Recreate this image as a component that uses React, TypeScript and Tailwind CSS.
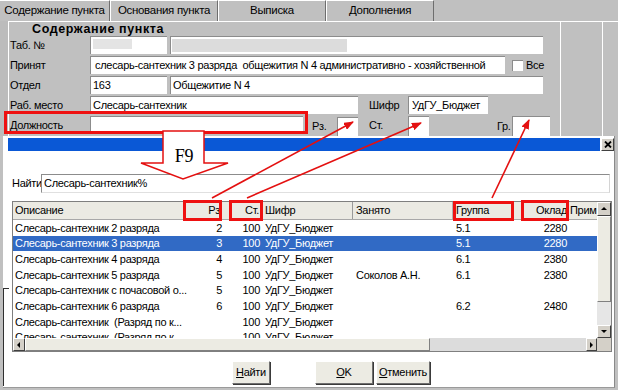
import React from "react";

type Row = { d: string; rz: string; st: string; sh: string; z: string; g: string; o: string; sel?: boolean };

const rows: Row[] = [
  { d: "Слесарь-сантехник 2 разряда", rz: "2", st: "100", sh: "УдГУ_Бюджет", z: "", g: "5.1", o: "2280" },
  { d: "Слесарь-сантехник 3 разряда", rz: "3", st: "100", sh: "УдГУ_Бюджет", z: "", g: "5.1", o: "2280", sel: true },
  { d: "Слесарь-сантехник 4 разряда", rz: "4", st: "100", sh: "УдГУ_Бюджет", z: "", g: "6.1", o: "2380" },
  { d: "Слесарь-сантехник 5 разряда", rz: "5", st: "100", sh: "УдГУ_Бюджет", z: "Соколов А.Н.", g: "6.1", o: "2380" },
  { d: "Слесарь-сантехник с почасовой о...", rz: "5", st: "100", sh: "УдГУ_Бюджет", z: "", g: "", o: "" },
  { d: "Слесарь-сантехник 6 разряда", rz: "6", st: "100", sh: "УдГУ_Бюджет", z: "", g: "6.2", o: "2480" },
  { d: "Слесарь-сантехник  (Разряд по к...", rz: "", st: "100", sh: "УдГУ_Бюджет", z: "", g: "", o: "" },
  { d: "Слесарь-сантехник  (Разряд по к...", rz: "", st: "100", sh: "УдГУ_Бюджет", z: "", g: "", o: "" },
];

function Input({ className = "", children }: { className?: string; children?: React.ReactNode }) {
  return (
    <div
      className={
        "bg-white border-t border-l border-[#8c8c8c] flex items-center whitespace-pre overflow-hidden leading-none " +
        className
      }
    >
      {children}
    </div>
  );
}

function Tab({ label, w, first }: { label: string; w: string; first?: boolean }) {
  return (
    <div
      className={
        "h-full flex items-center justify-center border-r border-r-[#6e6e6e] border-t border-t-white " +
        (first ? "" : "border-l border-l-white ") +
        w
      }
    >
      {label}
    </div>
  );
}

function Btn({ children, className = "" }: { children: React.ReactNode; className?: string }) {
  return (
    <div
      className={
        "h-[23px] flex items-center justify-center bg-[#ecebe3] border border-t-white border-l-white border-r-[#6f6f6f] border-b-[#6f6f6f] shadow-[1px_1px_0_#3a3a3a] " +
        className
      }
    >
      {children}
    </div>
  );
}

function Tri({ dir }: { dir: "up" | "down" | "left" | "right" }) {
  const pts: Record<string, string> = {
    up: "1,5 4,2 7,5",
    down: "1,2 4,5 7,2",
    left: "5,1 2,4 5,7",
    right: "2,1 5,4 2,7",
  };
  return (
    <svg width="8" height="8" viewBox="0 0 8 8">
      <polygon points={pts[dir]} fill="#000" />
    </svg>
  );
}

function ScrollBtn({ dir, className = "" }: { dir: "up" | "down" | "left" | "right"; className?: string }) {
  return (
    <div
      className={
        "flex items-center justify-center bg-[#d4d0c8] border border-t-white border-l-white border-r-[#404040] border-b-[#404040] " +
        className
      }
    >
      <Tri dir={dir} />
    </div>
  );
}

const cols = {
  d: "w-[171px] pl-[2px]",
  rz: "w-[41px] pr-[3px] text-right",
  st: "w-[37px] pr-[2px] text-right",
  sh: "w-[91px] pl-[3px]",
  z: "w-[100px] pl-[3px]",
  g: "w-[66px] pl-[3px]",
  o: "w-[50px] pr-[2px] text-right",
  p: "w-[28px] pl-[1px]",
};

export default function App() {
  return (
    <div className="relative w-[618px] h-[390px] overflow-hidden bg-[#c0c0c0] text-[11px] tracking-[-0.3px] text-black font-['Liberation_Sans',Arial,sans-serif]">
      {/* Tabs */}
      <div className="flex h-[21px] text-[11.5px]">
        <Tab label="Содержание пункта" w="w-[110px]" first />
        <Tab label="Основания пункта" w="w-[108px]" />
        <Tab label="Выписка" w="w-[108px]" />
        <Tab label="Дополнения" w="w-[108px]" />
      </div>

      {/* Form panel */}
      <div className="flex h-[115px]">
        <div className="w-[8px] bg-[#bcbcbc]" />
        <div className="flex-1 flex border-t border-l border-white">
          <div className="w-[551px] flex flex-col">
            <div className="h-[14px] pl-[23px] font-bold text-[12.5px] tracking-[0.6px] leading-[14px]">Содержание пункта</div>
            <div className="flex flex-col gap-[2px]">
              {/* Таб. № */}
              <div className="flex h-[18px] items-center">
                <div className="w-[81px] pl-[1px]">Таб. №</div>
                <Input className="w-[77px] h-full items-start">
                  <div className="mt-[2px] ml-[2px] w-[39px] h-[10px] bg-[#e4e4e4]" />
                </Input>
                <Input className="w-[373px] h-full ml-[3px]">
                  <div className="ml-[1px] w-[175px] h-[13px] bg-[#dcdcdc]" />
                </Input>
              </div>
              {/* Принят */}
              <div className="flex h-[18px] items-center">
                <div className="w-[81px] pl-[1px]">Принят</div>
                <Input className="w-[415px] h-full pl-[4px]">
                  слесарь-сантехник 3 разряда  общежития N 4 административно - хозяйственной
                </Input>
                <div className="ml-[7px] w-[11px] h-[11px] bg-white border-t border-l border-[#8c8c8c]" />
                <div className="ml-[3px]">Все</div>
              </div>
              {/* Отдел */}
              <div className="flex h-[18px] items-center">
                <div className="w-[81px] pl-[1px]">Отдел</div>
                <Input className="w-[77px] h-full pl-[2px]">163</Input>
                <Input className="w-[373px] h-full ml-[3px] pl-[2px]">Общежитие N 4</Input>
              </div>
              {/* Раб. место */}
              <div className="flex h-[18px] items-center">
                <div className="w-[81px] pl-[1px]">Раб. место</div>
                <Input className="w-[268px] h-full pl-[2px]">Слесарь-сантехник</Input>
                <div className="w-[50px] pl-[11px]">Шифр</div>
                <Input className="w-[80px] h-full pl-[3px]">УдГУ_Бюджет</Input>
              </div>
              {/* Должность */}
              <div className="flex h-[18px] items-start">
                <div className="w-[81px] pl-[1px] h-[18px] flex items-center">Должность</div>
                <Input className="w-[213px] h-[18px]" />
                <div className="w-[34px] pl-[9px] h-[18px] flex items-center mt-[1px]">Рз.</div>
                <Input className="w-[21px] h-[21px] mt-[1px]" />
                <div className="w-[50px] pl-[11px] h-[18px] flex items-center">Ст.</div>
                <Input className="w-[21px] h-[21px]" />
                <div className="w-[68px]" />
                <div className="w-[15px] h-[18px] flex items-center mt-[1px]">Гр.</div>
                <Input className="w-[38px] h-[21px]" />
              </div>
            </div>
          </div>
          <div className="w-[1px] bg-white" />
          <div className="w-[41px]" />
          <div className="w-[1px] bg-white" />
        </div>
      </div>

      {/* Dialog */}
      <div className="flex h-[254px]">
        <div className="w-[3px]" />
        <div className="w-[612px] h-[252px] bg-white border-r border-b border-r-[#8a8a8a] border-b-[#9a9a9a] flex flex-col">
          <div className="h-[2px]" />
          <div className="flex h-[13px] pl-[5px]">
            <div className="w-[592px] bg-[#0a58d6]" />
            <div className="ml-[1px] w-[13px] h-[13px] bg-[#d4d0c8] border border-t-white border-l-white border-r-[#404040] border-b-[#404040] flex items-center justify-center">
              <svg width="8" height="7" viewBox="0 0 8 7">
                <path d="M1 0.5 L7 6.5 M7 0.5 L1 6.5" stroke="#000" strokeWidth="1.8" />
              </svg>
            </div>
          </div>

          {/* Search */}
          <div className="flex items-center h-[19px] mt-[23px] pl-[9px]">
            <div className="w-[29px]">Найти</div>
            <div className="w-[569px] h-full bg-white border-t border-l border-t-[#8c8c8c] border-l-[#8c8c8c] border-r border-b border-r-[#d4d4d4] border-b-[#e0e0e0] flex items-center pl-[2px]">
              Слесарь-сантехник%
            </div>
          </div>

          {/* List */}
          <div className="ml-[9px] mt-[8px] w-[600px] h-[151px] border border-[#7f7f7f] flex flex-col">
            <div className="flex h-[136px]">
              <div className="w-[584px] flex flex-col overflow-hidden">
                <div className="flex h-[18px] shrink-0 items-center bg-[#ebeae3] border-b border-b-[#a8a8a8] whitespace-nowrap">
                  <div className={cols.d + " border-r border-r-[#b0b0b0] h-full flex items-center"}>Описание</div>
                  <div className="w-[41px] pr-[5px] h-full flex items-center justify-end">Рз</div>
                  <div className={cols.st + " h-full flex items-center justify-end border-r border-r-[#b0b0b0]"}>Ст.</div>
                  <div className={cols.sh + " h-full flex items-center border-r border-r-[#9a9a9a]"}>Шифр</div>
                  <div className={cols.z + " h-full flex items-center border-r border-r-[#b0b0b0]"}>Занято</div>
                  <div className={cols.g + " h-full flex items-center"}>Группа</div>
                  <div className={cols.o + " h-full flex items-center justify-end"}>Оклад</div>
                  <div className={cols.p + " h-full flex items-center overflow-hidden"}>Прим</div>
                </div>
                {rows.map((r, i) => (
                  <div
                    key={i}
                    className={
                      "flex h-[15.7px] shrink-0 items-center whitespace-pre " +
                      (r.sel ? "bg-[#316ac5] text-white" : "")
                    }
                  >
                    <div className={cols.d}>{r.d}</div>
                    <div className={cols.rz}>{r.rz}</div>
                    <div className={cols.st}>{r.st}</div>
                    <div className={cols.sh}>{r.sh}</div>
                    <div className={cols.z}>{r.z}</div>
                    <div className={cols.g}>{r.g}</div>
                    <div className={cols.o}>{r.o}</div>
                    <div className={cols.p}></div>
                  </div>
                ))}
              </div>
              {/* vertical scrollbar */}
              <div className="w-[14px] flex flex-col">
                <ScrollBtn dir="up" className="h-[14px]" />
                <div className="h-[86px] bg-[#ecebe3] border border-t-white border-l-white border-r-[#808080] border-b-[#808080]" />
                <div className="h-[23px] bg-[#e6e6e6]" />
                <ScrollBtn dir="down" className="h-[13px]" />
              </div>
            </div>
            {/* horizontal scrollbar */}
            <div className="flex h-[13px]">
              <ScrollBtn dir="left" className="w-[12px]" />
              <div className="w-[405px] bg-[#ecebe3] border border-t-white border-l-white border-r-[#808080] border-b-[#808080]" />
              <div className="w-[156px] bg-[#dcdcdc]" />
              <ScrollBtn dir="right" className="w-[11px]" />
              <div className="w-[14px] bg-[#d4d0c8]" />
            </div>
          </div>

          {/* Buttons */}
          <div className="flex mt-[9px] pl-[229px]">
            <Btn className="w-[38px]">
              <span className="underline">Н</span>айти
            </Btn>
            <Btn className="w-[58px] ml-[45px]">
              <span className="underline">O</span>K
            </Btn>
            <Btn className="w-[54px] ml-[3px]">
              <span className="underline">О</span>тменить
            </Btn>
          </div>
        </div>
      </div>

      {/* left bracket artifact */}
      <div className="absolute left-[3px] top-[288px] w-[6px] h-[98px] border-l border-t border-[#303030]" />

      {/* Red highlight boxes */}
      <div className="absolute left-[4px] top-[111px] w-[304px] h-[23px] border-[3px] border-[#ee1111]" />
      <div className="absolute left-[183px] top-[200px] w-[39px] h-[21px] border-[3px] border-[#ee1111]" />
      <div className="absolute left-[229px] top-[200px] w-[34px] h-[21px] border-[3px] border-[#ee1111]" />
      <div className="absolute left-[453px] top-[201px] w-[61px] h-[20px] border-[3px] border-[#ee1111]" />
      <div className="absolute left-[521px] top-[200px] w-[48px] h-[21px] border-[3px] border-[#ee1111]" />

      {/* F9 arrow and pointer arrows */}
      <svg className="absolute left-0 top-0 pointer-events-none" width="618" height="390" viewBox="0 0 618 390">
        <defs>
          <marker id="ah" markerUnits="userSpaceOnUse" markerWidth="10" markerHeight="8" refX="9" refY="4" orient="auto">
            <polygon points="0,0 10,4 0,8" fill="#e41010" />
          </marker>
        </defs>
        <polygon
          points="163,131 204,131 204,163 228,163 183,179 141,163 163,163"
          fill="#ffffff"
          stroke="#e41010"
          strokeWidth="1.5"
        />
        <text x="184" y="162" textAnchor="middle" fontFamily="'Liberation Serif', 'Times New Roman', serif" fontSize="18">
          F9
        </text>
        <line x1="212" y1="198" x2="353" y2="122" stroke="#e41010" strokeWidth="1.6" markerEnd="url(#ah)" />
        <line x1="247" y1="198" x2="421" y2="123" stroke="#e41010" strokeWidth="1.6" markerEnd="url(#ah)" />
        <line x1="492" y1="198" x2="529" y2="120" stroke="#e41010" strokeWidth="1.6" markerEnd="url(#ah)" />
      </svg>
    </div>
  );
}
